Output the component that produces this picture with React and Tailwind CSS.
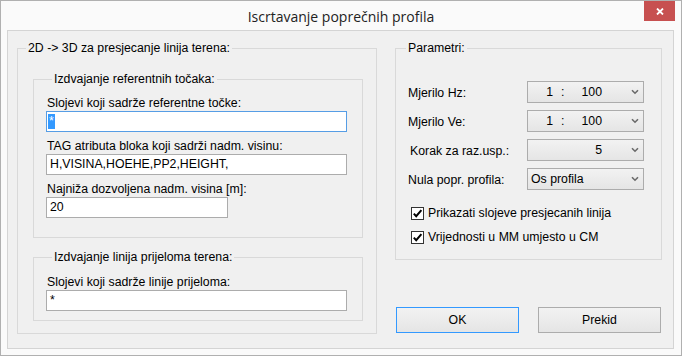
import React from 'react';

const TextBox = ({ children, width = 'w-[301px]', focused = false }) => (
  <div
    className={`${width} h-[21px] bg-white border flex items-center pl-[3px] leading-[15px] ${
      focused ? 'border-[#569de5]' : 'border-[#acacac]'
    }`}
  >
    {children}
  </div>
);

const Chevron = () => (
  <svg width="8" height="6" viewBox="0 0 8 6" className="block">
    <path d="M1 1.2 L4 4.2 L7 1.2" stroke="#6a6a6a" strokeWidth="1.6" fill="none" />
  </svg>
);

const Combo = ({ children, left = false }) => (
  <div className="w-[117px] h-[22px] border border-[#acacac] bg-linear-to-b from-[#f2f2f2] to-[#e5e5e5] flex items-center">
    <div className={left ? 'flex-1 flex pl-[3px]' : 'flex-1 flex justify-end pr-[24px]'}>{children}</div>
    <div className="w-[17px] flex justify-center">
      <Chevron />
    </div>
  </div>
);

const Scale = () => (
  <>
    <span>1</span>
    <span className="ml-[8px]">:</span>
    <span className="ml-[17px]">100</span>
  </>
);

const ParamRow = ({ label, children }) => (
  <div className="flex items-center h-[22px]">
    <span className="w-[131px] pl-[12px] pt-[2px]">{label}</span>
    {children}
  </div>
);

const Check = ({ label }) => (
  <div className="flex items-center h-[15px] pl-[15px]">
    <span className="w-[13px] h-[13px] border border-[#333333] bg-white flex items-center justify-center">
      <svg width="11" height="11" viewBox="0 0 11 11" className="block">
        <path d="M1.8 5.6 L4.2 8.2 L9.4 2.2" stroke="#000" strokeWidth="2" fill="none" />
      </svg>
    </span>
    <span className="ml-[4px]">{label}</span>
  </div>
);

export default function App() {
  return (
    <div className="w-[682px] h-[356px] bg-[#fafafa] border border-[#b0b0b0] flex flex-col text-[12.3px] text-black font-['Liberation_Sans',Arial,sans-serif]">
      {/* title bar */}
      <div className="h-[29px] relative flex items-center justify-center pt-[2px]">
        <span className="font-['Open_Sans',sans-serif] text-[14px] text-[#222]">Iscrtavanje poprečnih profila</span>
        <div className="absolute top-0 right-[6px] w-[31px] h-[20px] bg-[#c75050] flex items-center justify-center">
          <svg width="8" height="7" viewBox="0 0 8 7" className="block">
            <path d="M1 0.5 L7 6.5 M7 0.5 L1 6.5" stroke="#fff" strokeWidth="1.8" />
          </svg>
        </div>
      </div>

      {/* client area */}
      <div className="flex-1 ml-[6px] mr-[7px] mb-[6px] border border-[#d4d4d4] bg-[#f0f0f0] flex items-start pl-[9px] pt-[10px]">
        {/* left group */}
        <fieldset className="w-[360px] border border-[#d9d9d9] pb-[12px]">
          <legend className="ml-[8px] px-[2px] leading-[15px]">2D -&gt; 3D za presjecanje linija terena:</legend>

          <fieldset className="ml-[15px] mt-[16px] w-[330px] border border-[#d9d9d9] pl-[12px] pb-[19px]">
            <legend className="ml-[6px] px-[2px] leading-[15px]">Izdvajanje referentnih točaka:</legend>
            <div className="mt-[9px] leading-[15px] pl-[1px]">Slojevi koji sadrže referentne točke:</div>
            <TextBox focused>
              <span className="bg-[#3399ff] text-white px-[1px] -ml-[2px]">*</span>
            </TextBox>
            <div className="mt-[7px] leading-[15px] pl-[1px]">TAG atributa bloka koji sadrži nadm. visinu:</div>
            <TextBox>H,VISINA,HOEHE,PP2,HEIGHT,</TextBox>
            <div className="mt-[7px] leading-[15px] pl-[1px]">Najniža dozvoljena nadm. visina [m]:</div>
            <TextBox width="w-[182px]">20</TextBox>
          </fieldset>

          <fieldset className="ml-[15px] mt-[12px] w-[330px] border border-[#d9d9d9] pl-[12px] pb-[9px]">
            <legend className="ml-[6px] px-[2px] leading-[15px]">Izdvajanje linija prijeloma terena:</legend>
            <div className="mt-[10px] leading-[15px] pl-[1px]">Slojevi koji sadrže linije prijeloma:</div>
            <TextBox>*</TextBox>
          </fieldset>
        </fieldset>

        {/* right column */}
        <div className="ml-[18px] w-[267px] flex flex-col">
          <fieldset className="border border-[#d9d9d9] pb-[14px]">
            <legend className="ml-[10px] px-[2px] leading-[15px]">Parametri:</legend>
            <div className="mt-[25px] flex flex-col gap-[7px]">
              <ParamRow label="Mjerilo Hz:">
                <Combo><Scale /></Combo>
              </ParamRow>
              <ParamRow label="Mjerilo Ve:">
                <Combo><Scale /></Combo>
              </ParamRow>
              <ParamRow label={<span className="pl-[2px]">Korak za raz.usp.:</span>}>
                <Combo><span>5</span></Combo>
              </ParamRow>
              <ParamRow label="Nula popr. profila:">
                <Combo left><span>Os profila</span></Combo>
              </ParamRow>
            </div>
            <div className="mt-[16px] flex flex-col gap-[9px]">
              <Check label="Prikazati slojeve presjecanih linija" />
              <Check label="Vrijednosti u MM umjesto u CM" />
            </div>
          </fieldset>

          <div className="mt-[47px] pl-[1px] flex gap-[19px]">
            <button className="w-[123px] h-[26px] border border-[#3399ff] bg-linear-to-b from-[#f2f2f2] to-[#e5e5e5]">OK</button>
            <button className="w-[123px] h-[26px] border border-[#acacac] bg-linear-to-b from-[#f2f2f2] to-[#e5e5e5]">Prekid</button>
          </div>
        </div>
      </div>
    </div>
  );
}
